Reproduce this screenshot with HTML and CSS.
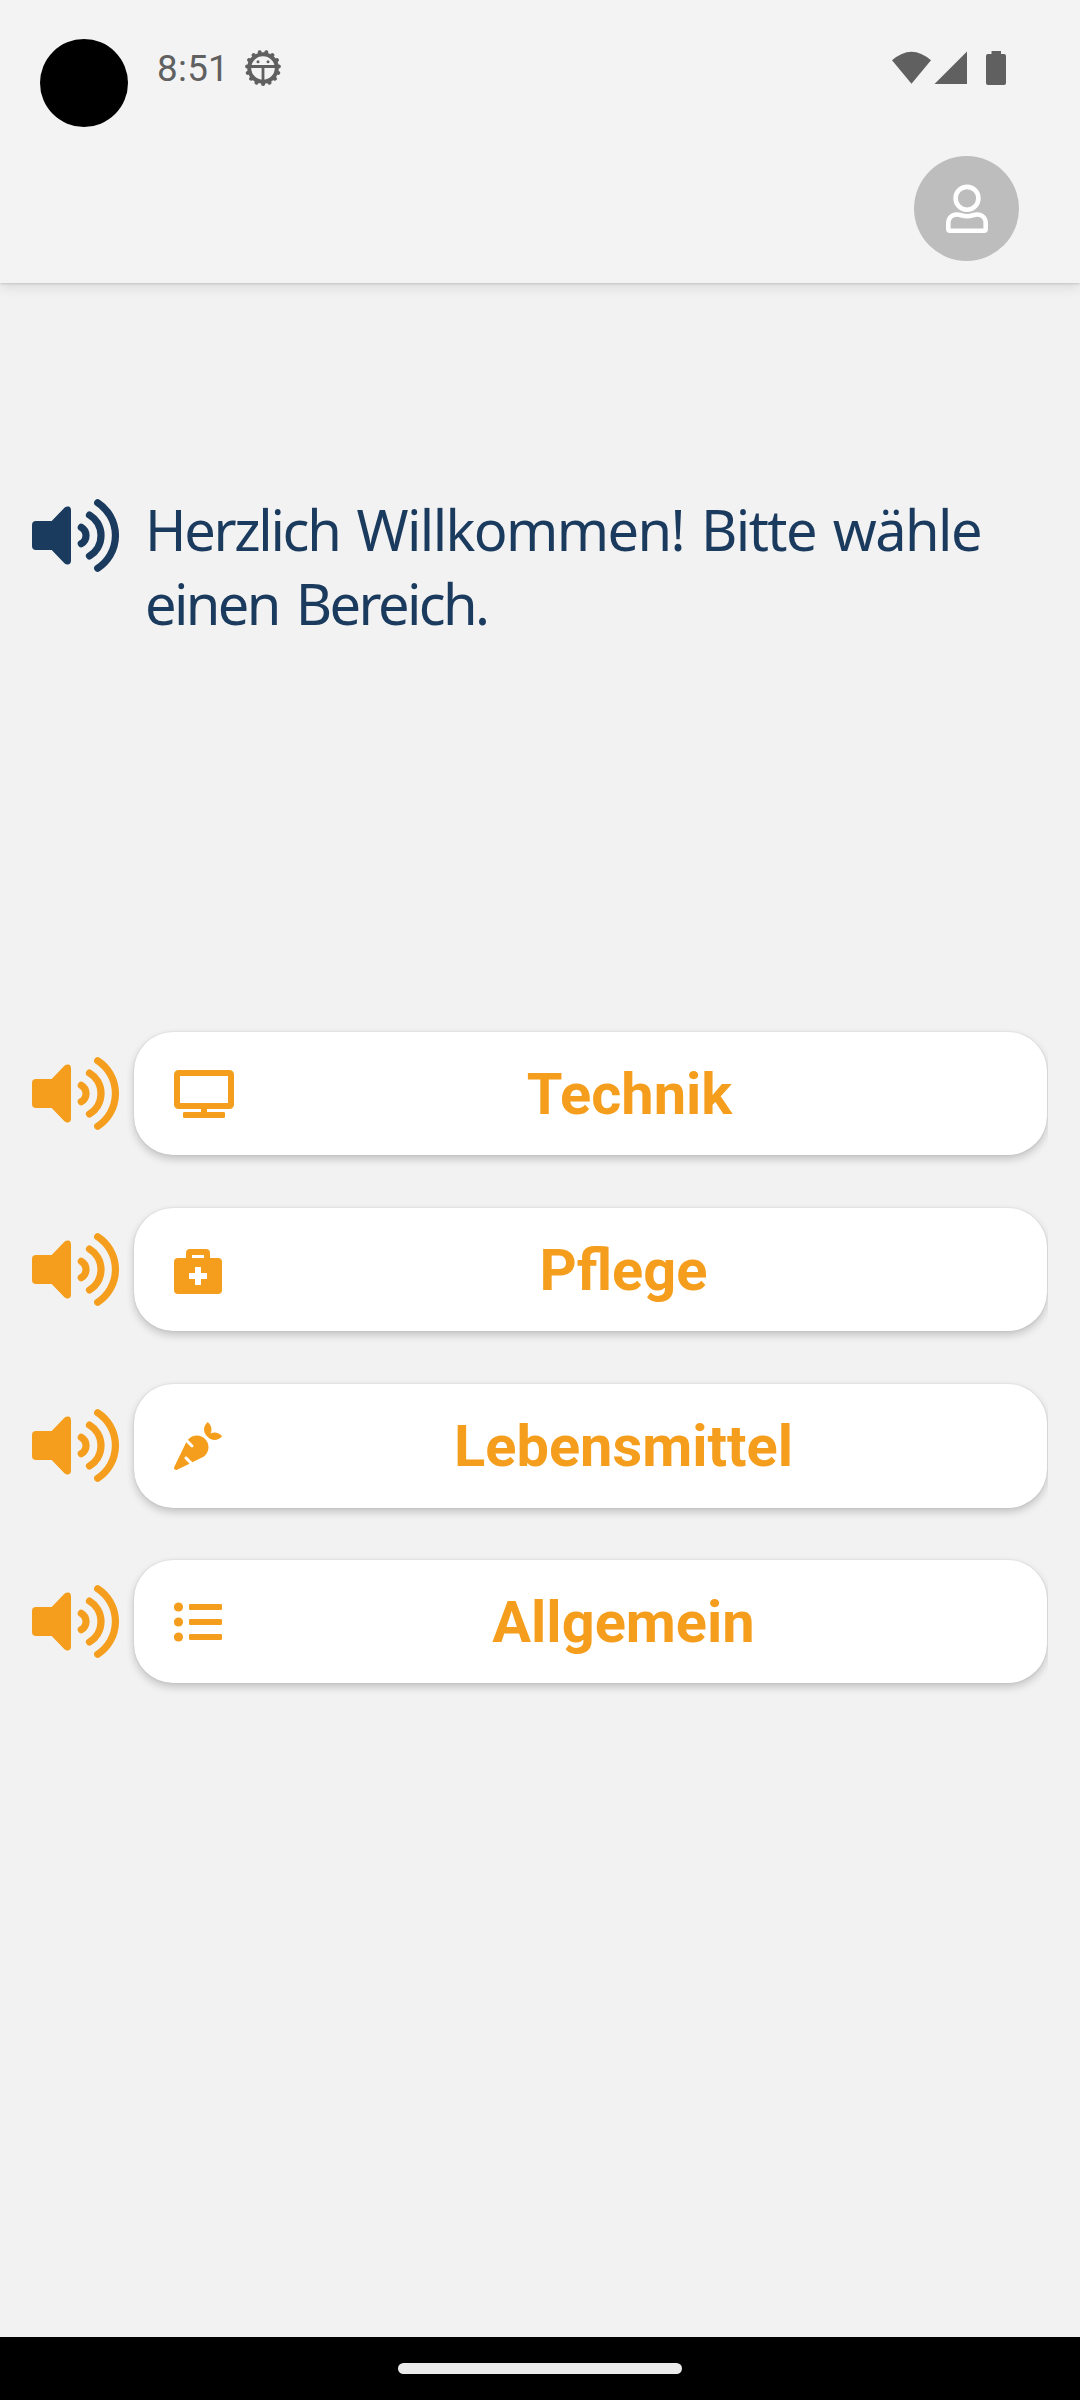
FILE: index.html
```html
<!DOCTYPE html>
<html lang="de">
<head>
<meta charset="utf-8">
<title>Bereiche</title>
<link rel="stylesheet" href="styles.css">
</head>
<body>
<svg class="defs" width="0" height="0" aria-hidden="true">
  <symbol id="speaker" viewBox="0 0 88 74">
    <path d="M4 22H19.7L32.4 8.8Q34.5 7 37 7.6 39 8.5 39 11V62Q39 64.500 37 65.300 34.500 66 32.400 64.200L19.700 51H4Q0 51 0 47V26Q0 22 4 22Z" fill="currentColor"/>
    <g fill="none" stroke="currentColor" stroke-width="7.200" stroke-linecap="round">
      <path d="M49.300 28.300A9.500 9.500 0 0 1 49.300 44.700"/>
      <path d="M57.500 16A24 24 0 0 1 57.500 57"/>
      <path d="M65.700 3.800A39 39 0 0 1 65.700 69.200"/>
    </g>
  </symbol>
</svg>
<div class="screen">
  <header class="header">
    <div class="status">
      <span class="camera"></span>
      <span class="time">8:51</span>
      <svg class="bug" viewBox="-19 -19 38 38">
        <circle r="13.800" fill="none" stroke="#606060" stroke-width="4"/>
        <circle r="16" fill="none" stroke="#606060" stroke-width="4" stroke-linecap="round" pathLength="150" stroke-dasharray="0.010 9.990" stroke-dashoffset="-7.500"/>
        <path d="M-14-1.500H14M0-1V14" stroke="#606060" stroke-width="2.800"/>
        <circle cx="-5" cy="-6.200" r="1.500" fill="#606060"/><circle cx="5" cy="-6.200" r="1.500" fill="#606060"/>
      </svg>
      <svg class="signals" viewBox="0 0 114 36" fill="#606060">
        <path d="M0 9.300Q19.500-8 39 9.300L19.500 32.700Z"/>
        <path d="M42.500 33L75 .5V33Z"/>
        <path d="M99.500 0H109V3H112Q114 3 114 5V32Q114 34 112 34H96Q94 34 94 32V5Q94 3 96 3H99.500Z"/>
      </svg>
    </div>
    <div class="toolbar">
      <span class="avatar">
        <svg width="44" height="50" viewBox="0 0 44 50" fill="none" stroke="#fff" stroke-width="4.600">
          <circle cx="22" cy="14.300" r="11.400"/>
          <path d="M3.300 41.500V39.500C3.300 34 7 30.500 12 30.500 15.500 30.500 17 32.300 22 32.300S28.500 30.500 32 30.500C37 30.500 40.700 34 40.700 39.500V45Q40.700 46.700 39 46.700H5Q3.300 46.700 3.300 45Z"/>
        </svg>
      </span>
    </div>
  </header>
  <main class="content">
    <section class="welcome">
      <svg class="speaker"><use href="#speaker"/></svg>
      <h1 class="title"><span class="line"><span class="tight">Herzlich</span> Willkommen! Bitte wähle</span> <span class="line second">einen Bereich.</span></h1>
    </section>
    <nav class="areas">
      <div class="row">
        <svg class="speaker"><use href="#speaker"/></svg>
        <div class="card">
          <svg class="icon" width="60" height="48" viewBox="0 0 60 48"><rect x="3" y="3" width="54" height="33" rx="1.500" fill="none" stroke="currentColor" stroke-width="6"/><path d="M27 38H33V43H27Z" fill="currentColor"/><rect x="9" y="42" width="42" height="6" rx="1.200" fill="currentColor"/></svg>
          <span class="label">Technik</span>
        </div>
      </div>
      <div class="row">
        <svg class="speaker"><use href="#speaker"/></svg>
        <div class="card">
          <svg class="icon" width="48" height="48" viewBox="0 0 48 48"><path fill="currentColor" fill-rule="evenodd" d="M4 12H12V7Q12 3 16 3H32Q36 3 36 7V12H44Q48 12 48 16V44Q48 48 44 48H4Q0 48 0 44V16Q0 12 4 12ZM18 9V12H30V9ZM21 21V27H15V33H21V39H27V33H33V27H27V21Z"/></svg>
          <span class="label">Pflege</span>
        </div>
      </div>
      <div class="row tall">
        <svg class="speaker"><use href="#speaker"/></svg>
        <div class="card">
          <svg class="icon" width="48" height="48" viewBox="0 0 512 512"><path fill="currentColor" d="M298.200 156.600c-52.700-25.700-114.500-10.500-150.200 32.800l55.200 55.200c6.300 6.300 6.300 16.400 0 22.600-3.100 3.100-7.200 4.700-11.300 4.700s-8.200-1.600-11.300-4.700L130.400 217 2.300 479.700c-2.900 6-3.100 13.300 0 19.700 5.400 11.100 18.900 15.700 30 10.300l133.600-65.200-49.200-49.200c-6.300-6.200-6.300-16.400 0-22.600 6.300-6.200 16.400-6.200 22.600 0l57 57 102-49.800c24-11.700 44.500-31.300 57.100-57.100 30.100-61.700 4.500-136.100-57.200-166.200zm92.100-34.900C409.800 81 399.700 32.900 360 0c-50.300 41.700-52.500 107.500-7.900 151.900l8 8c44.400 44.600 110.300 42.400 151.900-7.900-32.900-39.700-81-49.800-121.700-30.300z"/></svg>
          <span class="label">Lebensmittel</span>
        </div>
      </div>
      <div class="row">
        <svg class="speaker"><use href="#speaker"/></svg>
        <div class="card">
          <svg class="icon" width="48" height="48" viewBox="0 0 48 48" fill="currentColor"><circle cx="4.500" cy="9" r="4.600"/><circle cx="4.500" cy="24" r="4.600"/><circle cx="4.500" cy="39" r="4.600"/><rect x="15" y="6" width="33" height="6" rx="1.200"/><rect x="15" y="21" width="33" height="6" rx="1.200"/><rect x="15" y="36" width="33" height="6" rx="1.200"/></svg>
          <span class="label">Allgemein</span>
        </div>
      </div>
    </nav>
  </main>
  <footer class="navbar"><span class="pill"></span></footer>
</div>
</body>
</html>
```
FILE: styles.css
```css
* { box-sizing: border-box; }
body { margin: 0; background: #f2f2f2; font-family: Roboto, sans-serif; }
.defs { display: block; }
.screen { width: 1080px; height: 2400px; display: flex; flex-direction: column; overflow: hidden; }
.header {
  height: 283px;
  background: #f3f3f3;
  box-shadow: 0 1px 2px rgba(0, 0, 0, .12), 0 4px 12px rgba(0, 0, 0, .1);
}
.status { height: 136px; display: flex; align-items: flex-start; padding: 39px 74px 0 40px; }
.camera { width: 88px; height: 88px; border-radius: 50%; background: #000; }
.time { margin: 8px 0 0 29px; width: 75px; font-size: 36.75px; line-height: 43px; letter-spacing: .3px; color: #606060; }
.bug { width: 38px; height: 38px; margin: 10px 0 0 12px; }
.signals { width: 114px; height: 36px; margin: 12px 0 0 auto; }
.toolbar { display: flex; justify-content: flex-end; padding: 20px 61px 0 0; }
.avatar {
  width: 105px; height: 105px; border-radius: 50%; background: #bdbdbd;
  display: flex; align-items: flex-start; justify-content: center; padding-top: 28px;
}
.content { flex: 1; display: flex; flex-direction: column; padding: 203px 32px 0; }
.speaker { width: 88px; height: 74px; flex: none; display: block; }
.welcome { height: 546px; display: flex; gap: 25px; color: #1a3a5e; }
.welcome .speaker { margin-top: 13px; }
.title { margin: 6px 0 0; font: 400 56px/74px "Noto Sans", sans-serif; }
.line { display: block; white-space: nowrap; letter-spacing: -1.6px; word-spacing: 4px; }
.tight { letter-spacing: -2.3px; }
.second { letter-spacing: -2.6px; word-spacing: 5px; }
.areas { display: flex; flex-direction: column; gap: 53px; color: #f59e1d; clip-path: inset(-20px 0); }
.row { display: flex; align-items: center; gap: 14px; height: 123px; padding-right: 1px; }
.row.tall { height: 124px; margin-bottom: -1px; }
.card {
  flex: 1; height: 100%; display: flex; align-items: center; padding: 0 22px 0 40px;
  background: #fff; border-radius: 39px;
  box-shadow: 0 0 2px rgba(0, 0, 0, .13), 0 4px 8px rgba(0, 0, 0, .2);
}
.icon { flex: none; margin-top: 1px; }
.tall .icon { margin-top: 0; }
.label { flex: 1; text-align: center; font-size: 57.75px; font-weight: 700; line-height: 68px; }
.navbar { height: 63px; background: #000; display: flex; justify-content: center; padding-top: 26px; }
.pill { width: 284px; height: 11px; border-radius: 6px; background: #ebebeb; }
```
